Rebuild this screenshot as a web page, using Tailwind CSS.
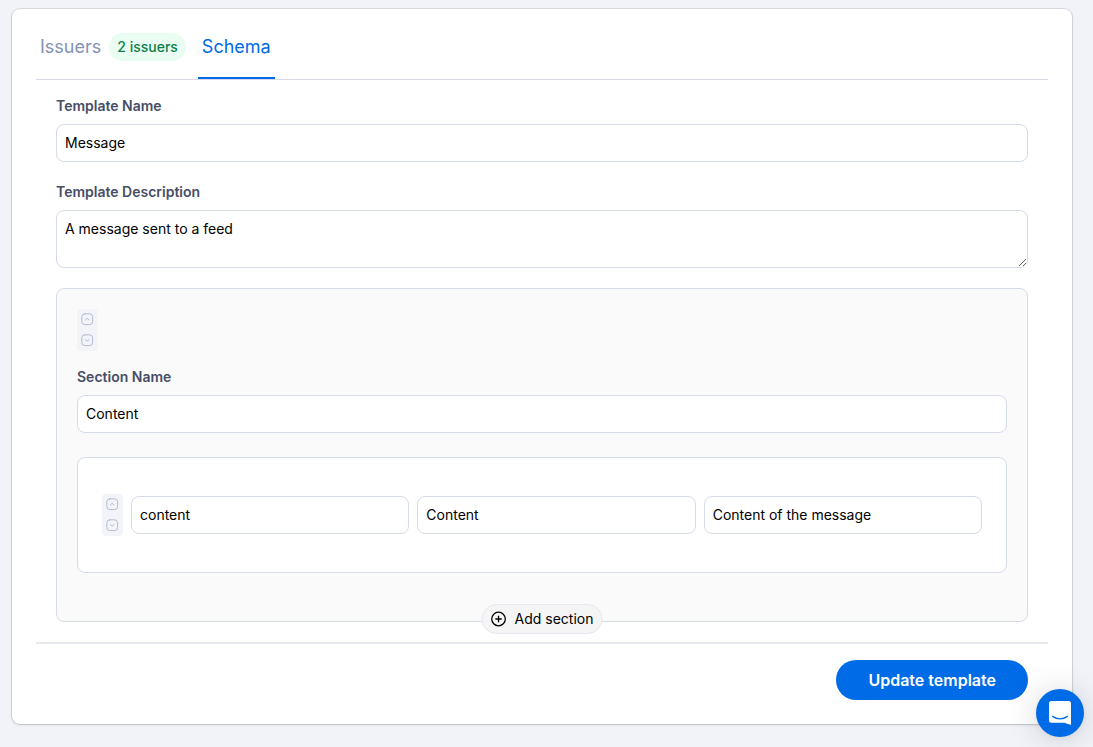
<!DOCTYPE html>
<html lang="en">
<head>
    <meta charset="UTF-8">
    <meta name="viewport" content="width=device-width, initial-scale=1.0">
    <title>Edit Template</title>
    <script src="https://cdn.jsdelivr.net/npm/@tailwindcss/browser@4"></script>
</head>
<body class="bg-[#f2f3f8] font-['Inter',sans-serif] text-sm text-black min-h-screen pt-[9px] pl-3 pr-[21px] pb-5">
    <main class="bg-white rounded-lg px-6 pb-6 shadow-sm ring-1 ring-black/10">
        <!-- Tabs -->
        <nav class="flex gap-2 border-b border-[#d5dae6] text-lg">
            <a href="#issuers" class="flex items-center gap-2 px-1 pt-6 pb-4 border-b-2 border-transparent text-[#8492b4]">
                Issuers
                <span class="bg-[#e9fdf2] text-[#0d7f4b] text-sm leading-5 font-medium rounded-full px-2 py-1">2 issuers</span>
            </a>
            <a href="#schema" class="flex items-center px-1 pt-6 pb-4 border-b-2 border-[#006be6] text-[#006be6]">Schema</a>
        </nav>

        <form>
            <div class="px-5 pt-4 pb-5">
                <label for="name" class="block mb-2 font-semibold text-[#474d66]">Template Name</label>
                <input type="text" id="name" value="Message" class="block w-full h-[38px] px-2 pb-0.5 bg-white border border-[#d5dbe8] rounded-lg">

                <label for="description" class="block mt-5 mb-2 font-semibold text-[#474d66]">Template Description</label>
                <textarea id="description" class="block w-full h-[58px] px-2 py-2 bg-white border border-[#d5dbe8] rounded-lg resize">A message sent to a feed</textarea>

                <!-- Section -->
                <section class="relative mt-5 px-5 pt-5 pb-12 bg-[#fafafa] border border-[#d5dbe8] rounded-lg">
                    <div class="flex flex-col w-[21px] bg-[#f3f4f9] rounded-sm text-[#b4b9d0]">
                        <button type="button" aria-label="Move section up" class="flex items-center justify-center h-[21px]">
                            <svg class="size-[13px]" viewBox="0 0 13 13" fill="none" stroke="currentColor" stroke-linecap="round" stroke-linejoin="round"><rect x="0.8" y="0.8" width="10.8" height="10.8" rx="3"/><path d="M4.4 6.9 6.2 5.3 8 6.9"/></svg>
                        </button>
                        <button type="button" aria-label="Move section down" class="flex items-center justify-center h-[21px]">
                            <svg class="size-[13px]" viewBox="0 0 13 13" fill="none" stroke="currentColor" stroke-linecap="round" stroke-linejoin="round"><rect x="0.8" y="0.8" width="10.8" height="10.8" rx="3"/><path d="M4.4 5.6 6.2 7.2 8 5.6"/></svg>
                        </button>
                    </div>

                    <label for="section" class="block mt-4 mb-2 font-semibold text-[#474d66]">Section Name</label>
                    <input type="text" id="section" value="Content" class="block w-full h-[38px] px-2 pb-0.5 bg-white border border-[#d5dbe8] rounded-lg">

                    <!-- Attributes -->
                    <div class="flex items-center gap-2 mt-6 px-6 py-9 bg-white border border-[#d5dbe8] rounded-lg">
                        <div class="flex flex-col w-[21px] shrink-0 bg-[#f3f4f9] rounded-sm text-[#b4b9d0]">
                            <button type="button" aria-label="Move attribute up" class="flex items-center justify-center h-[21px]">
                                <svg class="size-[13px]" viewBox="0 0 13 13" fill="none" stroke="currentColor" stroke-linecap="round" stroke-linejoin="round"><rect x="0.8" y="0.8" width="10.8" height="10.8" rx="3"/><path d="M4.4 6.9 6.2 5.3 8 6.9"/></svg>
                            </button>
                            <button type="button" aria-label="Move attribute down" class="flex items-center justify-center h-[21px]">
                                <svg class="size-[13px]" viewBox="0 0 13 13" fill="none" stroke="currentColor" stroke-linecap="round" stroke-linejoin="round"><rect x="0.8" y="0.8" width="10.8" height="10.8" rx="3"/><path d="M4.4 5.6 6.2 7.2 8 5.6"/></svg>
                            </button>
                        </div>
                        <input type="text" aria-label="Attribute key" value="content" class="flex-1 min-w-0 h-[38px] px-2 pb-0.5 bg-white border border-[#d5dbe8] rounded-lg">
                        <input type="text" aria-label="Attribute title" value="Content" class="flex-1 min-w-0 h-[38px] px-2 pb-0.5 bg-white border border-[#d5dbe8] rounded-lg">
                        <input type="text" aria-label="Attribute description" value="Content of the message" class="flex-1 min-w-0 h-[38px] px-2 pb-0.5 bg-white border border-[#d5dbe8] rounded-lg">
                    </div>

                    <button type="button" class="absolute left-1/2 -bottom-[13px] -translate-x-1/2 flex items-center gap-2 h-[30px] px-2 whitespace-nowrap bg-[#f5f5f5] border border-[#e6e8f0] rounded-full">
                        <svg class="size-4" viewBox="0 0 16 16" fill="none" stroke="currentColor" stroke-width="1.3"><circle cx="8" cy="8" r="6.8"/><path d="M8 4.8v6.4M4.8 8h6.4"/></svg>
                        Add section
                    </button>
                </section>
            </div>

            <div class="border-t-2 border-[#e6e9f0] px-5 pt-4 flex justify-end">
                <button type="submit" class="h-10 px-8 rounded-full bg-[#006be6] text-white text-base font-semibold">Update template</button>
            </div>
        </form>
    </main>

    <!-- Chat launcher -->
    <button type="button" aria-label="Open chat" class="fixed right-[9px] bottom-[10px] size-12 flex items-center justify-center rounded-full bg-[#006be6] text-white shadow-[0_1px_6px_rgba(0,0,0,0.06),0_2px_32px_rgba(0,0,0,0.16)]">
        <svg class="w-[22px] h-6" viewBox="0 0 22 24" fill="none"><path fill="currentColor" d="M2.5 0h17A2.500 2.500 0 0 1 22 2.500V24s-3-.9-6.500-2.200h-13A2.500 2.500 0 0 1 0 19.300V2.500A2.500 2.500 0 0 1 2.500 0z"/><path d="M3.600 15.400c4.400 3.200 10.400 3.200 14.800 0" stroke="#006be6" stroke-width="1.300" stroke-linecap="round"/></svg>
    </button>
</body>
</html>
